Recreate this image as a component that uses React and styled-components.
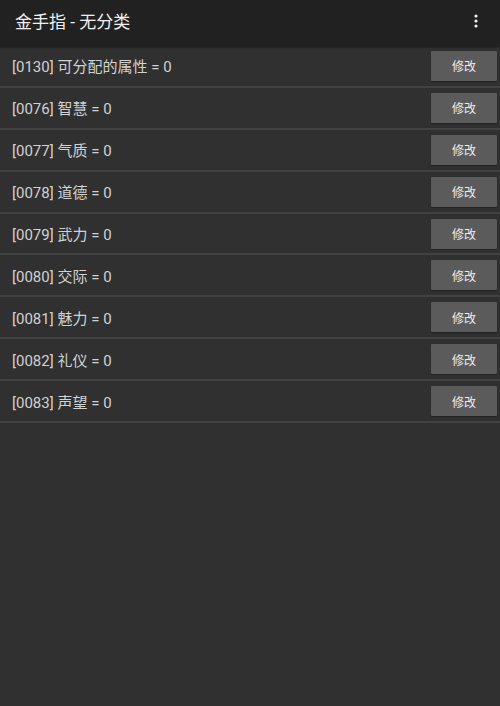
import React from 'react';
import styled, { createGlobalStyle } from 'styled-components';

const items = [
    { id: '0130', name: '可分配的属性', value: 0 },
    { id: '0076', name: '智慧', value: 0 },
    { id: '0077', name: '气质', value: 0 },
    { id: '0078', name: '道德', value: 0 },
    { id: '0079', name: '武力', value: 0 },
    { id: '0080', name: '交际', value: 0 },
    { id: '0081', name: '魅力', value: 0 },
    { id: '0082', name: '礼仪', value: 0 },
    { id: '0083', name: '声望', value: 0 },
];

const GlobalStyle = createGlobalStyle`
    html, body {
        margin: 0;
        padding: 0;
        background: #303030;
    }
    body {
        font-family: Roboto, "Noto Sans CJK SC", sans-serif;
    }
`;

const Page = styled.div`
    width: 500px;
    height: 706px;
    background: #303030;
    display: flex;
    flex-direction: column;
`;

const Toolbar = styled.header`
    height: 46px;
    box-sizing: border-box;
    flex-shrink: 0;
    background: #212121;
    display: flex;
    align-items: center;
    justify-content: space-between;
    padding: 0 14px 5px 15px;
    box-shadow: 0 1px 2px rgba(0, 0, 0, 0.5);
    position: relative;
    z-index: 1;
`;

const Title = styled.h1`
    margin: 0;
    font-size: 17px;
    font-weight: 400;
    color: #f0f0f0;
`;

const MenuButton = styled.div`
    width: 20px;
    height: 20px;
    display: flex;
    align-items: center;
    justify-content: center;
`;

const List = styled.ul`
    list-style: none;
    margin: 0;
    padding: 0;
`;

const Row = styled.li`
    height: 39.9px;
    display: flex;
    align-items: center;
    justify-content: space-between;
    padding: 0 3px 0 12px;
    border-bottom: 2px solid #424242;
`;

const Label = styled.span`
    font-size: 15px;
    color: #d2d2d2;
`;

const EditButton = styled.button`
    width: 66px;
    height: 30px;
    border: none;
    border-radius: 1px;
    background: #5b5b5b;
    color: #ececec;
    font-family: "Noto Sans CJK SC", sans-serif;
    font-size: 12px;
    padding: 0;
    cursor: pointer;
    box-shadow: 0 1px 1px rgba(0, 0, 0, 0.3);
`;

const App = () => (
    <Page>
        <GlobalStyle />
        <Toolbar>
            <Title>金手指 - 无分类</Title>
            <MenuButton>
                <svg width="4" height="14" viewBox="0 0 4 14">
                    <circle cx="2" cy="2" r="1.6" fill="#f0f0f0" />
                    <circle cx="2" cy="7" r="1.6" fill="#f0f0f0" />
                    <circle cx="2" cy="12" r="1.6" fill="#f0f0f0" />
                </svg>
            </MenuButton>
        </Toolbar>
        <List>
            {items.map(item => (
                <Row key={item.id}>
                    <Label>[{item.id}] {item.name} = {item.value}</Label>
                    <EditButton>修改</EditButton>
                </Row>
            ))}
        </List>
    </Page>
);

export default App;
